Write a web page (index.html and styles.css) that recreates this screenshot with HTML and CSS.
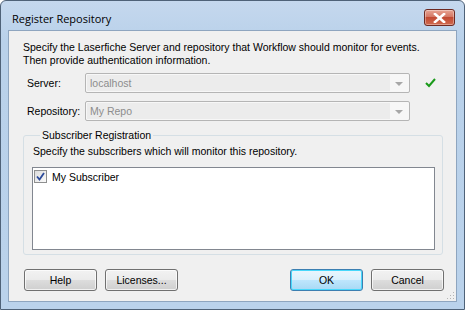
FILE: index.html
```html
<!DOCTYPE html>
<html lang="en">
<head>
  <meta charset="UTF-8" />
  <title>Register Repository</title>
  <link rel="stylesheet" href="styles.css">
</head>
<body>

  <div class="window">
    <div class="titlebar">
      <span class="title">Register Repository</span>
      <span class="close-btn">
        <svg width="13" height="10" viewBox="0 0 13 10">
          <path d="M2 1 L11 9 M11 1 L2 9" stroke="#fff" stroke-width="2.6" stroke-linecap="square"/>
        </svg>
      </span>
    </div>

    <div class="client">
      <p class="intro">Specify the Laserfiche Server and repository that Workflow should monitor for events.<br>Then provide authentication information.</p>

      <!-- server / repository -->
      <div class="field-row">
        <label class="field-label">Server:</label>
        <div class="combo">
          <span class="combo-text">localhost</span>
          <span class="combo-arrow"></span>
        </div>
        <svg class="ok-mark" width="11" height="10" viewBox="0 0 11 10">
          <path d="M1 5 L4 8 L10 1" fill="none" stroke="#1a9a1a" stroke-width="2"/>
        </svg>
      </div>
      <div class="field-row">
        <label class="field-label">Repository:</label>
        <div class="combo">
          <span class="combo-text">My Repo</span>
          <span class="combo-arrow"></span>
        </div>
      </div>

      <fieldset class="group">
        <legend>Subscriber Registration</legend>
        <p class="group-text">Specify the subscribers which will monitor this repository.</p>
        <div class="listbox">
          <div class="list-item">
            <span class="checkbox">
              <svg width="9" height="9" viewBox="0 0 9 9">
                <path d="M1 4.5 L3.5 7.5 L8 1" fill="none" stroke="#2b4a9a" stroke-width="1.8"/>
              </svg>
            </span>
            <span>My Subscriber</span>
          </div>
        </div>
      </fieldset>

      <div class="buttons">
        <button class="btn">Help</button>
        <button class="btn">Licenses...</button>
        <span class="spacer"></span>
        <button class="btn default">OK</button>
        <button class="btn">Cancel</button>
      </div>

      <span class="grip"></span>
    </div>
  </div>

</body>
</html>
```

FILE: styles.css
```css
* {
  margin: 0;
  padding: 0;
  box-sizing: border-box;
}

body {
  width: 465px;
  height: 310px;
  overflow: hidden;
  background: #fff;
  font-family: "Liberation Sans", Arial, sans-serif;
  font-size: 10.5px;
  color: #000;
}

.window {
  width: 465px;
  height: 310px;
  border: 1px solid #4f6278;
  border-radius: 6px 6px 0 0;
  background: linear-gradient(#c5d8ee, #b9d1ea 40px, #bad2eb);
  display: flex;
  flex-direction: column;
  padding: 0 7px 7px;
}

.titlebar {
  height: 29px;
  display: flex;
  align-items: center;
  justify-content: space-between;
  padding: 6px 2px 0 4px;
}

.title {
  font-family: "Open Sans", "Liberation Sans", sans-serif;
  font-size: 11px;
  color: #000;
  margin-top: -1px;
}

.close-btn {
  width: 31px;
  height: 17px;
  margin-top: -2px;
  border: 1px solid #6e2a22;
  border-radius: 3px;
  background: linear-gradient(#e8a493, #d47865 45%, #c24a33 50%, #cf6a4f);
  display: flex;
  align-items: center;
  justify-content: center;
  box-shadow: inset 0 0 0 1px rgba(255,255,255,0.35);
}

.client {
  flex: 1;
  position: relative;
  background: #f0f0f0;
  border: 1px solid #8ea5bf;
  padding: 10px 7px 0 14px;
}

.intro {
  line-height: 13px;
  white-space: nowrap;
  margin-bottom: 6px;
}

.field-row {
  display: flex;
  align-items: center;
  margin-bottom: 8px;
}

.field-label {
  width: 62px;
  padding-left: 4px;
  white-space: nowrap;
}

.combo {
  width: 325px;
  height: 20px;
  border: 1px solid #b5b5b5;
  border-radius: 2px;
  background: #f7f7f7;
  display: flex;
  align-items: center;
  padding: 1px;
}

.combo-text {
  flex: 1;
  height: 100%;
  background: #ececec;
  color: #8d8d8d;
  padding-left: 3px;
  display: flex;
  align-items: center;
}

.combo-arrow {
  width: 18px;
  height: 100%;
  display: flex;
  align-items: center;
  justify-content: center;
}

.combo-arrow::after {
  content: "";
  border-left: 4px solid transparent;
  border-right: 4px solid transparent;
  border-top: 4px solid #a8a8a8;
  margin-top: 1px;
}

.ok-mark {
  margin-left: 15px;
  margin-top: -1px;
}

.group {
  width: 420px;
  margin-top: 5px;
  border: 1px solid #d5dfe5;
  border-radius: 3px;
  padding: 0 7px 4px 8px;
}

.group legend {
  margin-left: 8px;
  padding: 0 2px;
  line-height: 13px;
}

.group-text {
  line-height: 13px;
  margin: 3px 0 9px 1px;
}

.listbox {
  height: 83px;
  border: 1px solid #828790;
  background: #fff;
  padding: 1px 0 0 1px;
}

.list-item {
  display: flex;
  align-items: center;
  gap: 5px;
  height: 15px;
}

.checkbox {
  width: 13px;
  height: 13px;
  border: 1px solid #8e8f8f;
  background: linear-gradient(135deg, #dcdcdc, #fafafa);
  display: flex;
  align-items: center;
  justify-content: center;
}

.buttons {
  display: flex;
  gap: 8px;
  margin-top: 14px;
  padding-left: 1px;
  width: 421px;
}

.spacer {
  flex: 1;
}

.btn {
  width: 73px;
  height: 22px;
  font-family: "Liberation Sans", Arial, sans-serif;
  font-size: 10.5px;
  color: #000;
  border: 1px solid #707070;
  border-radius: 3px;
  background: linear-gradient(#f2f2f2, #ebebeb 50%, #dddddd 51%, #cfcfcf);
  box-shadow: inset 0 0 0 1px rgba(255,255,255,0.7);
}

.btn.default {
  border-color: #3c7fb1;
  background: linear-gradient(#eaf6fd, #d9f0fc 50%, #bee6fd 51%, #a7d9f5);
  box-shadow: inset 0 0 0 1px #48d8fb;
}

.grip {
  position: absolute;
  right: 2px;
  bottom: 2px;
  width: 8px;
  height: 8px;
  background: radial-gradient(circle, #b4b4b4 0.8px, transparent 1px) 0 0 / 3px 3px;
  clip-path: polygon(100% 0, 100% 100%, 0 100%);
}
```
